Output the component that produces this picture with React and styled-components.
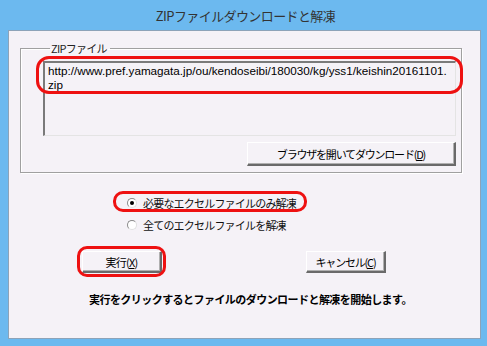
import styled, { createGlobalStyle } from "styled-components";

const GlobalStyle = createGlobalStyle`
    html, body {
        margin: 0;
        padding: 0;
        background: #6cb9ef;
    }
    body {
        font-family: "Liberation Sans", "Noto Sans CJK JP", sans-serif;
        font-size: 12px;
        color: #000;
    }
`;

const Frame = styled.div`
    width: 487px;
    height: 346px;
    background: #6cb9ef;
    display: flex;
    flex-direction: column;
    box-sizing: border-box;
    padding: 0 6px 7px 8px;
`;

const TitleBar = styled.div`
    height: 30px;
    display: flex;
    align-items: center;
    justify-content: center;
    font-family: "Noto Sans CJK JP", sans-serif;
    font-size: 13px;
    color: #333;
    letter-spacing: -0.6px;
    padding-left: 2px;
`;

const Client = styled.div`
    position: relative;
    flex: 1;
    background: #f5f2f7;
    border: 1px solid #8da3b8;
    box-sizing: border-box;
    padding: 11px 19px 0 11px;
    display: flex;
    flex-direction: column;
`;

const GroupBox = styled.fieldset`
    margin: 0;
    height: 131px;
    box-sizing: border-box;
    border: 1px solid #a0a0a0;
    box-shadow: inset 1px 1px 0 #fff, 1px 1px 0 #fff;
    padding: 7px 5px 0 22px;
    display: flex;
    flex-direction: column;
    align-items: flex-start;
`;

const Legend = styled.legend`
    font-family: "Noto Sans CJK JP", sans-serif;
    font-size: 11px;
    letter-spacing: -0.7px;
    padding: 0 3px 0 1px;
    margin-left: 7px;
    line-height: 12px;
    color: #222;
`;

const UrlBox = styled.div`
    width: 413px;
    height: 75px;
    box-sizing: border-box;
    border-top: 2px solid #7a7a7a;
    border-left: 2px solid #7a7a7a;
    border-right: 1px solid #e4e4e4;
    border-bottom: 1px solid #e4e4e4;
    padding: 1px 3px;
    font-family: "Liberation Sans", sans-serif;
    font-size: 11.7px;
    line-height: 14px;
    white-space: nowrap;
`;

const Button = styled.button`
    width: ${(p) => p.$w}px;
    height: ${(p) => p.$h}px;
    box-sizing: border-box;
    background: #f5f2f7;
    border: none;
    border-top: 1px solid #fff;
    border-left: 1px solid #fff;
    border-right: 2px solid #6a6a6a;
    border-bottom: 2px solid #6a6a6a;
    box-shadow: inset -1px -1px 0 #b0b0b0;
    font-family: "Noto Sans CJK JP", sans-serif;
    font-size: 11px;
    letter-spacing: ${(p) => p.$ls}px;
    color: #000;
    padding: 0;
    margin: 0;
    u {
        text-decoration: underline;
        text-underline-offset: 1px;
    }
`;

const DownloadRow = styled.div`
    display: flex;
    width: 413px;
    justify-content: flex-end;
    margin-top: 6px;
`;

const Radios = styled.div`
    display: flex;
    flex-direction: column;
    gap: 6px;
    margin: 22px 0 0 107px;
`;

const RadioRow = styled.label`
    display: flex;
    align-items: center;
    gap: 6px;
    font-family: "Noto Sans CJK JP", sans-serif;
    font-size: 11px;
    letter-spacing: -0.8px;
    line-height: 16px;
    color: #111;
`;

const Circle = styled.span`
    width: 10px;
    height: 10px;
    border-radius: 50%;
    box-sizing: border-box;
    border: 1px solid #8a8a8a;
    border-bottom-color: #e0e0e0;
    border-right-color: #e0e0e0;
    background: #fff;
    display: flex;
    align-items: center;
    justify-content: center;
    &::after {
        content: "";
        width: 4px;
        height: 4px;
        border-radius: 50%;
        background: ${(p) => (p.$on ? "#000" : "transparent")};
    }
`;

const ButtonRow = styled.div`
    display: flex;
    gap: 144px;
    margin: 18px 0 0 62px;
    align-items: flex-end;
`;

const Message = styled.div`
    margin: 18px 0 0 69px;
    font-family: "Noto Sans CJK JP", sans-serif;
    font-weight: bold;
    font-size: 11px;
    line-height: 16px;
    letter-spacing: -0.55px;
    white-space: nowrap;
    color: #000;
`;

const Ring = styled.div`
    position: absolute;
    left: ${(p) => p.$x}px;
    top: ${(p) => p.$y}px;
    width: ${(p) => p.$w}px;
    height: ${(p) => p.$h}px;
    box-sizing: border-box;
    border: 3px solid #ee1111;
    border-radius: ${(p) => p.$r}px;
    pointer-events: none;
`;

export default function App() {
    return (
        <>
            <GlobalStyle />
            <Frame>
                <TitleBar>ZIPファイルダウンロードと解凍</TitleBar>
                <Client>
                    <GroupBox>
                        <Legend>ZIPファイル</Legend>
                        <UrlBox>
                            http://www.pref.yamagata.jp/ou/kendoseibi/180030/kg/yss1/keishin20161101.
                            <br />
                            zip
                        </UrlBox>
                        <DownloadRow>
                            <Button $w={209} $h={24} $ls={-1.2}>
                                ブラウザを開いてダウンロード(<u>D</u>)
                            </Button>
                        </DownloadRow>
                    </GroupBox>
                    <Radios>
                        <RadioRow>
                            <Circle $on />
                            必要なエクセルファイルのみ解凍
                        </RadioRow>
                        <RadioRow>
                            <Circle />
                            全てのエクセルファイルを解凍
                        </RadioRow>
                    </Radios>
                    <ButtonRow>
                        <Button $w={80} $h={22} $ls={-0.8}>
                            実行(<u>X</u>)
                        </Button>
                        <Button $w={80} $h={22} $ls={-1.2}>
                            キャンセル(<u>C</u>)
                        </Button>
                    </ButtonRow>
                    <Message>実行をクリックするとファイルのダウンロードと解凍を開始します。</Message>
                    <Ring $x={27} $y={25} $w={427} $h={38} $r={13} />
                    <Ring $x={104} $y={160} $w={194} $h={21} $r={10} />
                    <Ring $x={68} $y={215} $w={89} $h={31} $r={10} />
                </Client>
            </Frame>
        </>
    );
}
